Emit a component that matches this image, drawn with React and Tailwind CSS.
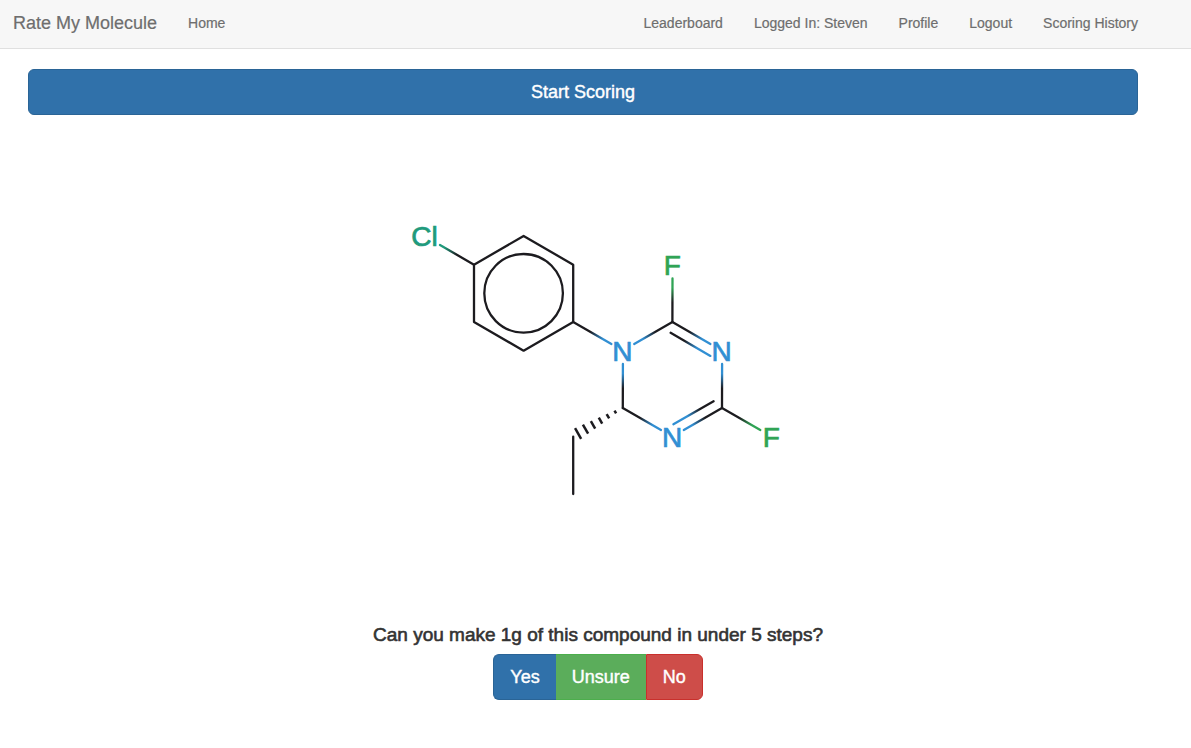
const CARBON = '#1c1b1f';
const NITROGEN = '#318fd3';
const FLUORINE = '#30a455';
const CHLORINE = '#209a7c';

const navLinks = ['Leaderboard', 'Logged In: Steven', 'Profile', 'Logout', 'Scoring History'];

// Each bond runs from a carbon atom to a hetero atom and changes colour halfway.
// "from"/"to" are atom centres, "a"/"b" the visible ends of the line.
const mixedBonds = [
  { id: 'c-cl', from: [126, 149.7], to: [76.4, 121], a: [126, 149.7], b: [92, 130], color: CHLORINE },
  { id: 'ph-n1', from: [225.2, 207], to: [274.8, 235.7], a: [225.2, 207], b: [263.4, 229], color: NITROGEN },
  { id: 'c2-n1', from: [324.4, 207], to: [274.8, 235.7], a: [324.4, 207], b: [286.2, 229], color: NITROGEN },
  { id: 'c2-f', from: [324.4, 207], to: [324.5, 149.8], a: [324.4, 207], b: [324.5, 163.5], color: FLUORINE },
  { id: 'c2-n3', from: [324.4, 207], to: [374, 235.7], a: [324.4, 207], b: [362.4, 229], color: NITROGEN },
  { id: 'c2-n3-inner', from: [324.4, 207], to: [374, 235.7], a: [322.6, 217.8], b: [362.4, 240.9], color: NITROGEN },
  { id: 'c4-n3', from: [374, 293], to: [374.1, 235.7], a: [374, 293], b: [374.1, 249], color: NITROGEN },
  { id: 'c4-n5', from: [374, 293], to: [324.4, 321.7], a: [374, 293], b: [335.8, 315], color: NITROGEN },
  { id: 'c4-n5-inner', from: [374, 293], to: [324.4, 321.7], a: [365.6, 286.2], b: [325.4, 309.3], color: NITROGEN },
  { id: 'c4-f', from: [374, 293], to: [423.6, 321.7], a: [374, 293], b: [412.3, 315], color: FLUORINE },
  { id: 'c6-n1', from: [274.8, 293], to: [274.9, 235.7], a: [274.8, 293], b: [274.9, 249], color: NITROGEN },
  { id: 'c6-n5', from: [274.8, 293], to: [324.4, 321.7], a: [274.8, 293], b: [313, 315], color: NITROGEN },
];

const atoms = [
  { label: 'Cl', x: 76.4, y: 131, color: CHLORINE },
  { label: 'F', x: 324.2, y: 160, color: FLUORINE },
  { label: 'N', x: 274.4, y: 246, color: NITROGEN },
  { label: 'N', x: 373.6, y: 246, color: NITROGEN },
  { label: 'N', x: 324.2, y: 332, color: NITROGEN },
  { label: 'F', x: 423.2, y: 332, color: FLUORINE },
];

// Hashed stereo bond: centre and half length of every dash.
const hashes = [
  [267.3, 297, 1.6],
  [259.9, 301.3, 2.5],
  [252.5, 305.6, 3.4],
  [245, 309.9, 4.3],
  [237.5, 314.2, 5.2],
  [230.1, 318.5, 6.1],
];

function Molecule() {
  return (
    <svg viewBox="0 0 500 500" role="img" aria-label="Molecule" className="mx-auto block w-full max-w-[500px]">
      <defs>
        {mixedBonds.map((m) => (
          <linearGradient
            key={m.id}
            id={m.id}
            gradientUnits="userSpaceOnUse"
            x1={m.from[0]}
            y1={m.from[1]}
            x2={m.to[0]}
            y2={m.to[1]}
          >
            <stop offset="0.34" stopColor={CARBON} />
            <stop offset="0.6" stopColor={m.color} />
          </linearGradient>
        ))}
      </defs>
      <g fill="none" stroke={CARBON} strokeWidth="2.3" strokeLinecap="round" strokeLinejoin="round">
        <path d="M175.6 121 225.2 149.7V207L175.6 235.7 126 207V149.7Z" />
        <circle cx="175.6" cy="178.3" r="39.3" />
        <path d="M225.2 321.7V379" />
        {mixedBonds.map((m) => (
          <path key={m.id} d={`M${m.a[0]} ${m.a[1]}L${m.b[0]} ${m.b[1]}`} stroke={`url(#${m.id})`} />
        ))}
        {hashes.map(([x, y, h]) => (
          <path
            key={x}
            strokeLinecap="butt"
            strokeWidth="2.5"
            d={`M${x - h * 0.5} ${y - h * 0.87}L${x + h * 0.5} ${y + h * 0.87}`}
          />
        ))}
      </g>
      <g className="font-['Liberation_Sans',sans-serif] text-[28px]" textAnchor="middle" strokeWidth="0.7">
        {atoms.map((t) => (
          <text key={`${t.x}-${t.y}`} x={t.x} y={t.y} fill={t.color} stroke={t.color}>
            {t.label}
          </text>
        ))}
      </g>
    </svg>
  );
}

export default function App() {
  return (
    <div className="bg-white font-['Liberation_Sans',Arial,sans-serif] text-[#333333]">
      <nav className="flex flex-wrap items-center justify-between border-b border-[#e0e0e0] bg-[#f7f7f7] pt-[11px] pr-[53px] pb-[13px] text-[#6e6e6e] [-webkit-text-stroke:0.2px_#6e6e6e]">
        <div className="flex items-center">
          <a href="#" className="px-[13px] text-lg leading-6">Rate My Molecule</a>
          <a href="#" className="px-[18px] text-sm leading-6">Home</a>
        </div>
        <ul className="flex flex-wrap items-center gap-x-[31px]">
          {navLinks.map((label) => (
            <li key={label}>
              <a href="#" className="block text-sm leading-6">{label}</a>
            </li>
          ))}
        </ul>
      </nav>
      <main className="pt-5 pr-[23px] pb-12 pl-7">
        <div className="pr-[30px]">
          <button
            type="button"
            className="block h-[46px] w-full rounded-md border border-[#2a6496] bg-[#3071aa] text-lg font-normal text-white [-webkit-text-stroke:0.4px_white]"
          >
            Start Scoring
          </button>
        </div>
        <Molecule />
        <section className="flex flex-col items-center">
          <h1 className="pt-2 pb-[7px] text-center text-[19px] leading-6 [-webkit-text-stroke:0.6px_#333333]">
            Can you make 1g of this compound in under 5 steps?
          </h1>
          <div role="group" aria-label="Answer" className="flex h-[46px] text-lg text-white [-webkit-text-stroke:0.4px_white]">
            <button type="button" className="rounded-l-md border border-r-0 border-[#2a6496] bg-[#3071aa] px-4">Yes</button>
            <button type="button" className="border-y border-[#4cae4c] bg-[#5bad5b] px-4">Unsure</button>
            <button type="button" className="rounded-r-md border border-[#c9302c] bg-[#ce4d49] px-4">No</button>
          </div>
        </section>
      </main>
    </div>
  );
}
